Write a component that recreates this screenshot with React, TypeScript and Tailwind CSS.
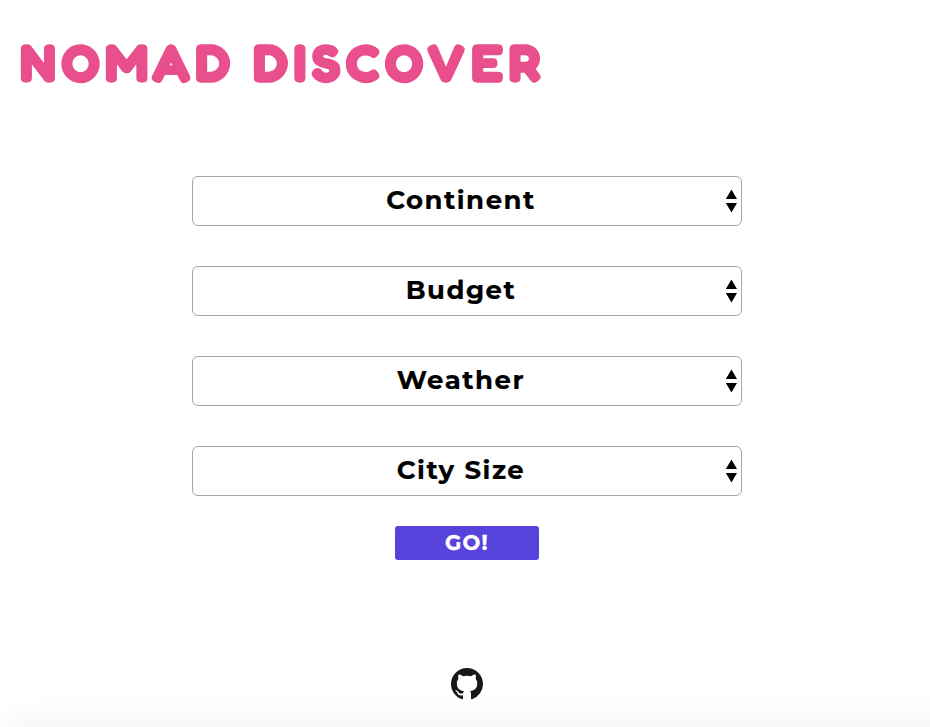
import React from "react";

const filters = ["Continent", "Budget", "Weather", "City Size"];

export default function App() {
  return (
    <main className="relative flex h-[727px] w-full flex-col items-center overflow-hidden bg-white font-['Montserrat','Inter',sans-serif] text-black">
      <h1 className="h-[176px] w-full pl-[20px] pt-[33px] font-['Fredoka',sans-serif] text-[53.5px] leading-[60px] font-bold tracking-[5.3px] [word-spacing:-0.5px] whitespace-nowrap text-[#e84f8c] [-webkit-text-stroke:1.3px_#e84f8c]">
        NOMAD DISCOVER
      </h1>
      <form className="ml-[4px] flex w-[550px] flex-col items-center gap-[40px]">
        {filters.map((label) => (
          <button
            key={label}
            type="button"
            className="flex h-[50px] w-full items-center rounded-[6px] border border-[#a6a6a6] bg-white pr-[4px] pb-[2px] text-[26px] font-bold tracking-[1.5px] [-webkit-text-stroke:0.2px_#000]"
          >
            <span className="flex-1 pl-[4px] text-center">{label}</span>
            <svg width="12" height="24" viewBox="0 0 12 24" className="mt-[2px]">
              <path d="M6.5 .5L12 10H.8zM6.5 23.5L.8 14H12z" />
            </svg>
          </button>
        ))}
      </form>
      <button
        type="button"
        className="mt-[30px] ml-[4px] h-[34px] w-[144px] rounded-[3px] bg-[#5742dc] text-[21px] leading-[34px] font-bold tracking-[1.3px] text-white [-webkit-text-stroke:0.4px_#fff]"
      >
        GO!
      </button>
      <svg width="32" height="32" viewBox="0 0 16 16" className="mt-[108px] ml-[4px] fill-[#181616]">
        <path d="M8 0C3.58 0 0 3.58 0 8c0 3.54 2.29 6.53 5.47 7.59.4.07.55-.17.55-.38 0-.19-.01-.82-.01-1.49-2.01.37-2.53-.49-2.69-.94-.09-.23-.48-.94-.82-1.13-.28-.15-.68-.52-.01-.53.63-.01 1.08.58 1.23.82.72 1.21 1.87.87 2.33.66.07-.52.28-.87.51-1.07-1.78-.2-3.64-.89-3.64-3.95 0-.87.31-1.59.82-2.15-.08-.2-.36-1.02.08-2.12 0 0 .67-.21 2.2.82.64-.18 1.32-.27 2-.27s1.36.09 2 .27c1.53-1.04 2.2-.82 2.2-.82.44 1.1.16 1.92.08 2.12.51.56.82 1.27.82 2.15 0 3.07-1.87 3.75-3.65 3.95.29.25.54.73.54 1.48 0 1.07-.01 1.93-.01 2.2 0 .21.15.46.55.38A8.01 8.01 0 0 0 16 8c0-4.42-3.58-8-8-8z" />
      </svg>
      <div className="pointer-events-none absolute right-[-40px] bottom-[-20px] left-[20px] h-[12px] shadow-[0_0_36px_10px_rgba(0,0,0,0.07)]" />
    </main>
  );
}
